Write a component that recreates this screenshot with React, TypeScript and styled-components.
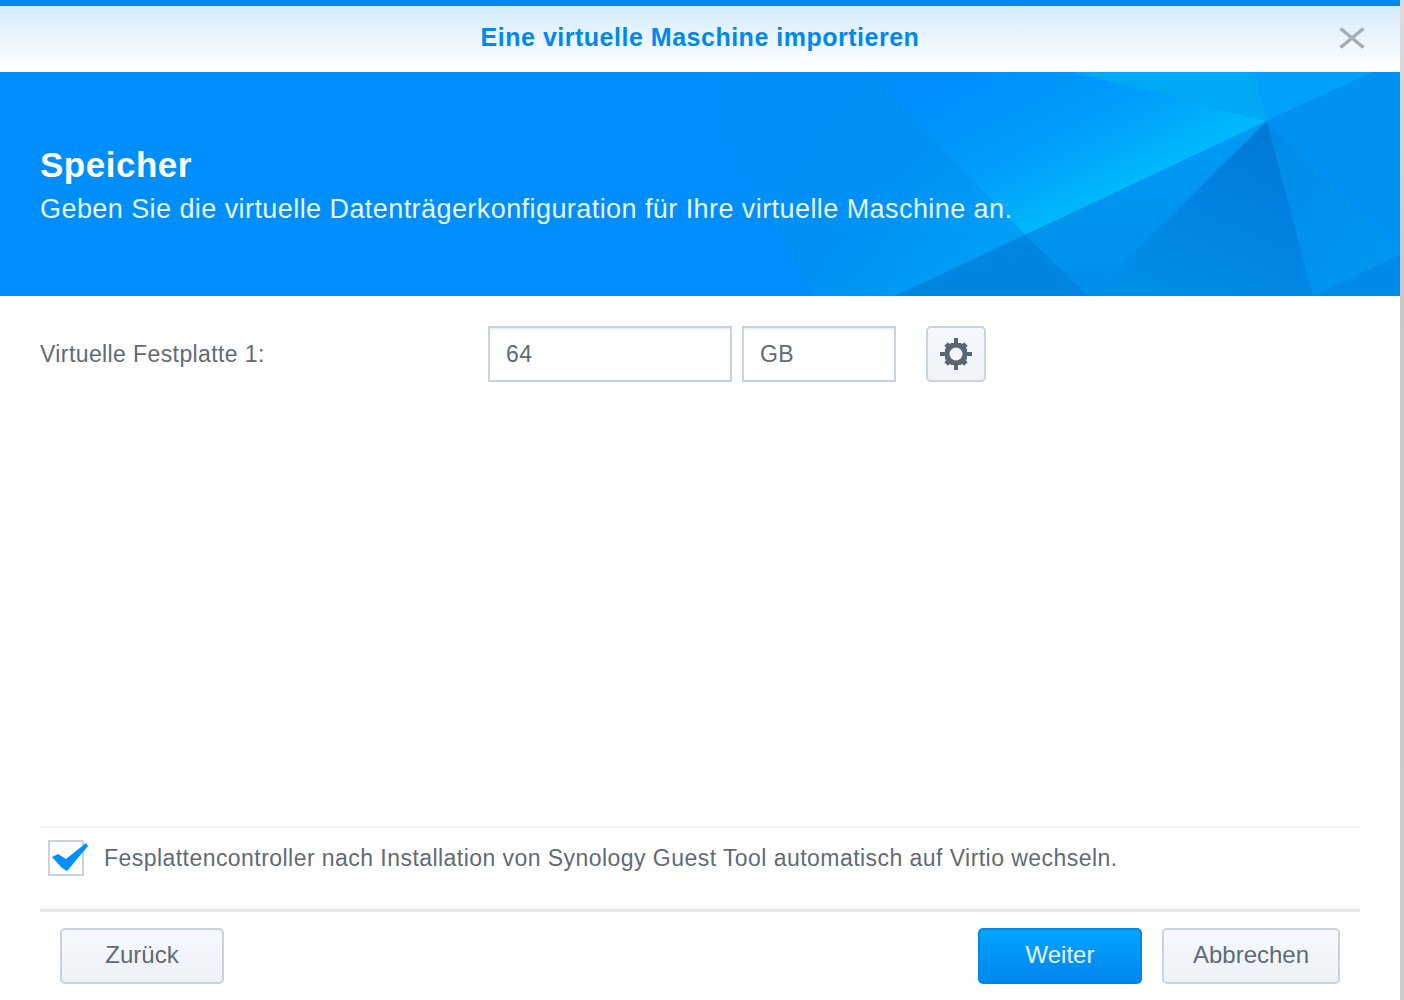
import React from "react";
import styled, { createGlobalStyle } from "styled-components";

const Global = createGlobalStyle`
  html, body { margin: 0; padding: 0; background: #fff; }
  body { font-family: "Liberation Sans", Arial, sans-serif; overflow: hidden; }
  * { box-sizing: border-box; }
`;

const Page = styled.div`
  width: 1404px;
  height: 1000px;
  display: flex;
  background: #fff;
`;
const Dialog = styled.div`
  width: 1400px;
  height: 1000px;
  display: flex;
  flex-direction: column;
  border-top: 6px solid #0086f0;
`;
const RightEdge = styled.div`
  width: 4px;
  background: linear-gradient(#dcdcdc, #c8c8c8 30%, #cccccc);
`;
const TitleBar = styled.header`
  height: 66px;
  flex: none;
  position: relative;
  display: flex;
  align-items: center;
  justify-content: center;
  padding-bottom: 4px;
  background: linear-gradient(#d4ebfd, #fff 94%);
`;
const Title = styled.h1`
  margin: 0;
  font-size: 25px;
  font-weight: 700;
  letter-spacing: 0.51px;
  color: #0088f2;
`;
const Close = styled.svg`
  position: absolute;
  right: 35px;
  top: 21px;
  width: 26px;
  height: 22px;
`;
const Banner = styled.section`
  height: 224px;
  flex: none;
  position: relative;
  overflow: hidden;
  background: #008ffa;
  padding: 73px 40px 0;
  color: #fff;
`;
const Facets = styled.svg`
  position: absolute;
  left: 0;
  top: 0;
  width: 1400px;
  height: 224px;
`;
const BannerTitle = styled.h2`
  position: relative;
  margin: 0;
  font-size: 35px;
  line-height: 40px;
  font-weight: 700;
  letter-spacing: 0.5px;
`;
const BannerText = styled.p`
  position: relative;
  margin: 8px 0 0;
  font-size: 27px;
  line-height: 32px;
  letter-spacing: 0.43px;
  color: #e8f5ff;
`;
const Body = styled.main`
  flex: 1;
  display: flex;
  flex-direction: column;
  padding: 0 40px;
`;
const FieldRow = styled.div`
  display: flex;
  align-items: flex-start;
  padding-top: 30px;
  flex: 1;
`;
const FieldLabel = styled.label`
  width: 448px;
  font-size: 23px;
  line-height: 56px;
  letter-spacing: 0.4px;
  color: #5f6b78;
`;
const Field = styled.div<{ $width: number }>`
  width: ${(p) => p.$width}px;
  height: 56px;
  margin-right: 10px;
  border: 2px solid #c6d3e0;
  box-shadow: inset 0 2px 0 #eef2f6;
  padding-left: 16px;
  font-size: 23px;
  line-height: 52px;
  letter-spacing: 0.4px;
  color: #5f6b78;
`;
const GearButton = styled.button`
  width: 60px;
  height: 56px;
  margin-left: 20px;
  padding: 0;
  display: flex;
  align-items: center;
  justify-content: center;
  border: 2px solid #c6d3e0;
  border-radius: 5px;
  background: linear-gradient(#f5f9fd, #eef3f8);
`;
const CheckRow = styled.div`
  height: 86px;
  flex: none;
  display: flex;
  align-items: flex-start;
  padding: 12px 0 0 8px;
  gap: 20px;
  border-top: 2px solid #edf1f5;
  border-bottom: 3px solid #e4e6e8;
  box-shadow: inset 0 -6px 6px -6px #ececec;
`;
const CheckBox = styled.div`
  position: relative;
  width: 36px;
  height: 36px;
  flex: none;
  border: 2px solid #c6d3e0;
  background: #fff;
`;
const CheckMark = styled.svg`
  position: absolute;
  left: -2px;
  top: -2px;
  width: 42px;
  height: 34px;
`;
const CheckText = styled.span`
  font-size: 23px;
  line-height: 36px;
  letter-spacing: 0.45px;
  color: #5f6b78;
`;
const Footer = styled.footer`
  height: 88px;
  flex: none;
  display: flex;
  align-items: flex-start;
  padding: 16px 60px 0;
  gap: 20px;
`;
const Spacer = styled.div`
  flex: 1;
`;
const Btn = styled.button<{ $width: number; $primary?: boolean }>`
  width: ${(p) => p.$width}px;
  height: 56px;
  padding: 0 0 2px;
  border-radius: 5px;
  font-family: inherit;
  font-size: 24px;
  border: 2px solid ${(p) => (p.$primary ? "#0086e8" : "#c6d3e0")};
  color: ${(p) => (p.$primary ? "#e6f6ff" : "#5f6b78")};
  background: ${(p) =>
    p.$primary ? "linear-gradient(#00a4ff, #0086f0)" : "linear-gradient(#f6f9fd, #edf2f7)"};
`;

export default function App() {
  return (
    <Page>
      <Global />
      <Dialog>
        <TitleBar>
          <Title>Eine virtuelle Maschine importieren</Title>
          <Close viewBox="0 0 26 22">
            <path d="M1.5 1.5 L24.5 20.5 M24.5 1.5 L1.5 20.5" stroke="#a3adb8" strokeWidth="3.4" fill="none" />
          </Close>
        </TitleBar>
        <Banner>
          <Facets viewBox="0 0 1400 224">
            <defs>
              <linearGradient id="glow" gradientUnits="userSpaceOnUse" x1="960" y1="10" x2="1035" y2="158">
                <stop offset="0" stopColor="#0090fc" />
                <stop offset="0.55" stopColor="#009dfb" />
                <stop offset="1" stopColor="#00b8fb" />
              </linearGradient>
              <linearGradient id="fadeL" x1="0" y1="0" x2="1" y2="0.6">
                <stop offset="0" stopColor="#008ef9" />
                <stop offset="0.65" stopColor="#0091f4" />
                <stop offset="1" stopColor="#009ef8" />
              </linearGradient>
              <linearGradient id="low" x1="0.2" y1="1" x2="0.8" y2="0">
                <stop offset="0" stopColor="#0090ea" />
                <stop offset="1" stopColor="#0078d8" />
              </linearGradient>
              <linearGradient id="mid" x1="0" y1="0" x2="0" y2="1">
                <stop offset="0" stopColor="#009af5" />
                <stop offset="1" stopColor="#008fea" />
              </linearGradient>
              <linearGradient id="rightSide" x1="0" y1="0" x2="1" y2="1">
                <stop offset="0" stopColor="#008ce8" />
                <stop offset="1" stopColor="#0098f2" />
              </linearGradient>
            </defs>
            <polygon points="700,0 869,0 1025,163 895,224 815,224" fill="url(#fadeL)" />
            <polygon points="869,0 1073,0 1267,49 1025,163" fill="url(#glow)" />
            <polygon points="1073,0 1255,0 1267,49" fill="#00a9f6" />
            <polygon points="1255,0 1373,0 1267,49" fill="#00a0fb" />
            <polygon points="1373,0 1400,0 1400,178 1267,49" fill="#0091f2" />
            <polygon points="1267,49 1025,163 1088,224" fill="url(#mid)" />
            <polygon points="1025,163 895,224 1088,224" fill="#0084e2" />
            <polygon points="1267,49 1090,224 1313,224" fill="url(#low)" />
            <polygon points="1267,49 1400,178 1400,183 1313,224" fill="url(#rightSide)" />
            <polygon points="1400,183 1313,224 1400,224" fill="#008ae8" />
          </Facets>
          <BannerTitle>Speicher</BannerTitle>
          <BannerText>Geben Sie die virtuelle Datenträgerkonfiguration für Ihre virtuelle Maschine an.</BannerText>
        </Banner>
        <Body>
          <FieldRow>
            <FieldLabel>Virtuelle Festplatte 1:</FieldLabel>
            <Field $width={244}>64</Field>
            <Field $width={154}>GB</Field>
            <GearButton aria-label="Einstellungen">
              <svg width="32" height="32" viewBox="0 0 32 32">
                <g fill="#5a6673">
                  <polygon points="11,5 21,5 27,11 27,21 21,27 11,27 5,21 5,11" />
                  {[0, 90, 180, 270].map((a) => (
                    <rect key={a} x="14" y="0" width="4" height="6" transform={`rotate(${a} 16 16)`} />
                  ))}
                  {[45, 135, 225, 315].map((a) => (
                    <rect key={a} x="13.5" y="2" width="5" height="6" transform={`rotate(${a} 16 16)`} />
                  ))}
                </g>
                <circle cx="16" cy="16" r="6.5" fill="#f2f6fa" />
              </svg>
            </GearButton>
          </FieldRow>
          <CheckRow>
            <CheckBox>
              <CheckMark viewBox="0 0 42 34">
                <polygon points="4,17 10,14 18,19 38,3 40,6 19,31 14,28" fill="#0090fb" />
              </CheckMark>
            </CheckBox>
            <CheckText>Fesplattencontroller nach Installation von Synology Guest Tool automatisch auf Virtio wechseln.</CheckText>
          </CheckRow>
        </Body>
        <Footer>
          <Btn $width={164}>Zurück</Btn>
          <Spacer />
          <Btn $width={164} $primary>Weiter</Btn>
          <Btn $width={178}>Abbrechen</Btn>
        </Footer>
      </Dialog>
      <RightEdge />
    </Page>
  );
}
